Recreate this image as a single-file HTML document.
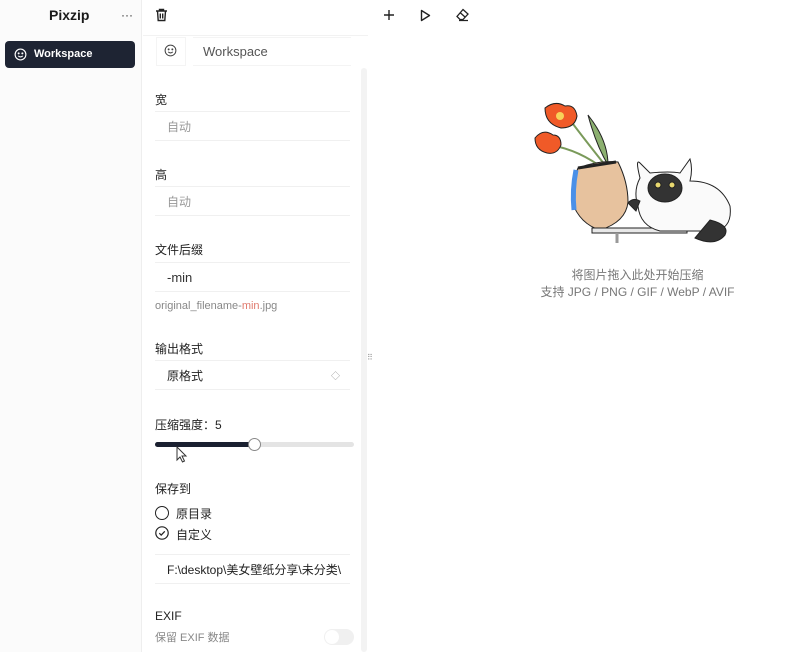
<!DOCTYPE html>
<html><head><meta charset="utf-8"><style>
*{margin:0;padding:0;box-sizing:border-box}
body{width:796px;height:652px;overflow:hidden;background:#fff;font-family:"Liberation Sans","Noto Sans CJK SC",sans-serif;color:#222;position:relative;font-size:12px}
.a{position:absolute}
.side{left:0;top:0;width:142px;height:652px;background:#fbfbfb;border-right:1px solid #eee}
.lbl{font-size:12px;color:#222}
.inp{left:155px;width:195px;height:30px;border-top:1px solid #f0f0f0;border-bottom:1px solid #f0f0f0;padding-left:12px;line-height:30px;font-size:12px}
</style></head><body>
<div class="a side"></div>
<div class="a" style="left:49px;top:7px;font-weight:bold;font-size:14px;color:#1a1a1a">Pixzip</div>
<div class="a" style="left:121px;top:8px;font-size:12px;color:#333;letter-spacing:0px">···</div>
<div class="a" style="left:5px;top:41px;width:130px;height:27px;background:#1e2433;border-radius:4px;color:#fff;font-weight:bold;font-size:11px;line-height:27px;padding-left:29px">Workspace</div>
<svg class="a" style="left:14px;top:48px" width="13" height="13" viewBox="0 0 14 14" fill="none" stroke="#fff" stroke-width="1.2"><circle cx="7" cy="7" r="5.8"/><circle cx="5" cy="5.8" r=".5" fill="#fff"/><circle cx="9" cy="5.8" r=".5" fill="#fff"/><path d="M4.5 8.5q2.5 2.2 5 0"/></svg>
<svg class="a" style="left:155px;top:8px" width="13" height="14" viewBox="0 0 13 14" fill="none" stroke="#222" stroke-width="1.4"><path d="M1 3h11M4.5 3V1.5h4V3M2.5 3l.7 9.5h6.6L10.5 3M5.3 5.5v5M7.7 5.5v5"/></svg>
<div class="a" style="left:143px;top:35px;width:225px;border-top:1px solid #f2f2f2"></div>
<div class="a" style="left:156px;top:37px;width:30px;height:29px;border:1px solid #f4f4f4"></div>
<svg class="a" style="left:164px;top:44px" width="13" height="13" viewBox="0 0 14 14" fill="none" stroke="#444" stroke-width="1.1"><circle cx="7" cy="7" r="5.8"/><circle cx="5" cy="5.8" r=".5" fill="#444"/><circle cx="9" cy="5.8" r=".5" fill="#444"/><path d="M4.5 8.5q2.5 2.2 5 0"/></svg>
<div class="a" style="left:193px;top:37px;width:158px;height:29px;border-top:1px solid #f4f4f4;border-bottom:1px solid #f4f4f4;padding-left:10px;line-height:28px;font-size:13px;color:#555">Workspace</div>
<div class="a" style="left:361px;top:68px;width:6px;height:584px;background:#f3f3f3;border-radius:3px"></div>
<div class="a lbl" style="left:155px;top:91px">宽</div>
<div class="a inp" style="top:111px;color:#999">自动</div>
<div class="a lbl" style="left:155px;top:166px">高</div>
<div class="a inp" style="top:186px;color:#999">自动</div>
<div class="a lbl" style="left:155px;top:241px">文件后缀</div>
<div class="a inp" style="top:262px;color:#333;font-size:13px">-min</div>
<div class="a" style="left:155px;top:300px;font-size:11px;color:#888">original_filename-<span style="color:#e07a6e">min</span>.jpg</div>
<div class="a lbl" style="left:155px;top:340px">输出格式</div>
<div class="a inp" style="top:360px;color:#222">原格式<span style="position:absolute;right:10px;top:0;font-size:9px;color:#999">◇</span></div>
<div class="a" style="left:367px;top:353px;font-size:8px;color:#999">⠿</div>
<div class="a lbl" style="left:155px;top:416px">压缩强度：5</div>
<div class="a" style="left:155px;top:442px;width:199px;height:5px;background:#e4e4e4;border-radius:3px"></div>
<div class="a" style="left:155px;top:442px;width:100px;height:5px;background:#1a2030;border-radius:3px"></div>
<div class="a" style="left:248px;top:438px;width:13px;height:13px;border:1px solid #888;background:#fff;border-radius:50%"></div>
<svg class="a" style="left:176px;top:446px" width="12" height="17" viewBox="0 0 12 17"><path d="M1 1v13l3-3 2.5 5 2-1-2.5-5h4z" fill="#fff" stroke="#333" stroke-width="1"/></svg>
<div class="a lbl" style="left:155px;top:480px">保存到</div>
<div class="a" style="left:155px;top:506px;width:14px;height:14px;border:1.3px solid #222;border-radius:50%"></div>
<div class="a lbl" style="left:176px;top:505px">原目录</div>
<svg class="a" style="left:155px;top:526px" width="14" height="14" viewBox="0 0 14 14" fill="none" stroke="#222" stroke-width="1.2"><circle cx="7" cy="7" r="6.2"/><path d="M4.3 7.2l1.9 1.9 3.6-3.8"/></svg>
<div class="a lbl" style="left:176px;top:526px">自定义</div>
<div class="a inp" style="top:554px;color:#222">F:\desktop\美女壁纸分享\未分类\</div>
<div class="a lbl" style="left:155px;top:609px">EXIF</div>
<div class="a" style="left:155px;top:629px;font-size:11px;color:#888">保留 EXIF 数据</div>
<div class="a" style="left:324px;top:629px;width:30px;height:16px;background:#f0f0f0;border-radius:8px"><div style="position:absolute;left:1px;top:1px;width:14px;height:14px;border-radius:50%;background:#fff"></div></div>
<svg class="a" style="left:383px;top:9px" width="12" height="12" viewBox="0 0 12 12" stroke="#222" stroke-width="1.4"><path d="M6 1v10M1 6h10"/></svg>
<svg class="a" style="left:420px;top:9px" width="11" height="13" viewBox="0 0 11 13" fill="none" stroke="#222" stroke-width="1.4"><path d="M1.5 1.5v10l8-5z" stroke-linejoin="round"/></svg>
<svg class="a" style="left:455px;top:8px" width="15" height="14" viewBox="0 0 15 14" fill="none" stroke="#222" stroke-width="1.3"><path d="M8 1.5l5 4.5-5 5.5H5L2 8.5z M5 4.5l5 4.5M4 12.5h9"/></svg>
<svg class="a" style="left:530px;top:100px" width="205" height="145" viewBox="0 0 205 145">
<g stroke="#222" stroke-width="1">
<path d="M40 20q15 20 35 45" stroke="#7a9a5a" stroke-width="2" fill="none"/>
<path d="M20 45q30 5 55 25" stroke="#7a9a5a" stroke-width="2" fill="none"/>
<path d="M58 15q20 25 20 50q-12-20-20-50z" fill="#8cb070"/>
<path d="M15 8q10-8 20-2q10-2 12 10q-2 12-16 12q-16-4-16-20z" fill="#f05a28"/>
<circle cx="30" cy="16" r="4" fill="#f7d35a" stroke="none"/>
<path d="M5 38q8-10 18-3q8 0 8 10q-4 10-14 8q-12-3-12-15z" fill="#f05a28"/>
<path d="M48 68q20-8 40-6q10 20 10 40q-2 20-28 28q-20-6-28-28q0-20 6-34z" fill="#e7c29e"/>
<path d="M46 70q-4 20-2 40" stroke="#4a90e8" stroke-width="5" fill="none"/>
<path d="M48 68l38-6" stroke-width="3"/>
<path d="M62 128h95v5h-95z" fill="#e8e8e8"/>
<path d="M87 133v10" stroke="#999" stroke-width="3"/>
<path d="M110 78q-5-20 0-15l10 10q20-2 30 0l10-14q3 10 0 22q30 0 40 25q3 25-20 25h-50q-20-5-22-25q-5-15 2-28z" fill="#fafafa"/>
<ellipse cx="135" cy="88" rx="17" ry="14" fill="#333"/>
<circle cx="128" cy="85" r="3" fill="#e8d870"/><circle cx="142" cy="85" r="3" fill="#e8d870"/>
<path d="M180 120q20 5 15 15q-10 12-30 3z" fill="#333"/>
<path d="M98 103q5-6 12-2l-4 10z" fill="#333"/>
</g>
</svg>
<div class="a" style="left:535px;top:267px;width:205px;text-align:center;font-size:12px;color:#777;line-height:17px">将图片拖入此处开始压缩<br>支持 JPG / PNG / GIF / WebP / AVIF</div>
</body></html>
